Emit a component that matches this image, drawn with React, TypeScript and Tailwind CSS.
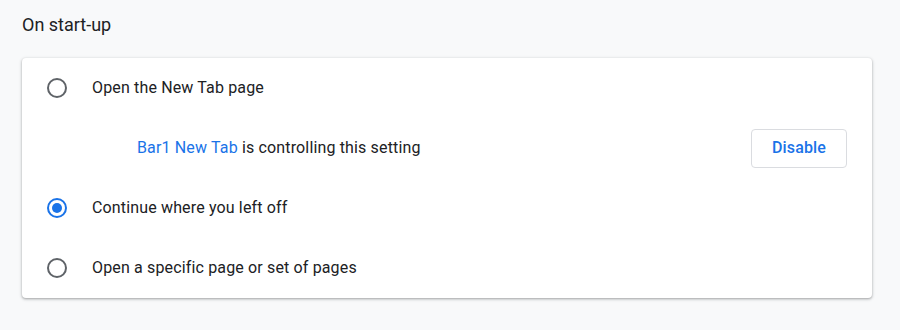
export default function App() {
  const Radio = ({ checked }: { checked?: boolean }) => (
    <span
      className={`flex h-[20px] w-[20px] shrink-0 items-center justify-center rounded-full border-2 ${
        checked ? "border-[#1a73e8]" : "border-[#5f6368]"
      }`}
    >
      {checked && <span className="h-[10px] w-[10px] rounded-full bg-[#1a73e8]" />}
    </span>
  );

  return (
    <div
      className="h-[330px] w-[900px] bg-[#f8f9fa] pl-[22px] pr-[28px] pt-[11px] text-[#202124]"
      style={{ fontFamily: "Roboto, 'Liberation Sans', sans-serif" }}
    >
      <h2 className="h-[36px] text-[18px] leading-[28px]">On start-up</h2>
      <div className="mt-[11px] rounded-[4px] bg-white text-[16px] tracking-[0.15px] shadow-[0_1px_2px_rgba(60,64,67,0.3),0_1px_3px_1px_rgba(60,64,67,0.15)]">
        <div className="flex h-[60px] items-center pl-[25px]">
          <Radio />
          <span className="ml-[25px]">Open the New Tab page</span>
        </div>
        <div className="flex h-[60px] items-center pl-[115px] pr-[25px]">
          <span className="flex-1">
            <span className="text-[#1a73e8]">Bar1 New Tab</span> is controlling this setting
          </span>
          <button className="h-[39px] w-[96px] rounded-[4px] border border-[#dadce0] bg-white font-medium text-[#1a73e8]">
            Disable
          </button>
        </div>
        <div className="flex h-[60px] items-center pl-[25px]">
          <Radio checked />
          <span className="ml-[25px]">Continue where you left off</span>
        </div>
        <div className="flex h-[60px] items-center pl-[25px]">
          <Radio />
          <span className="ml-[25px]">Open a specific page or set of pages</span>
        </div>
      </div>
    </div>
  );
}
